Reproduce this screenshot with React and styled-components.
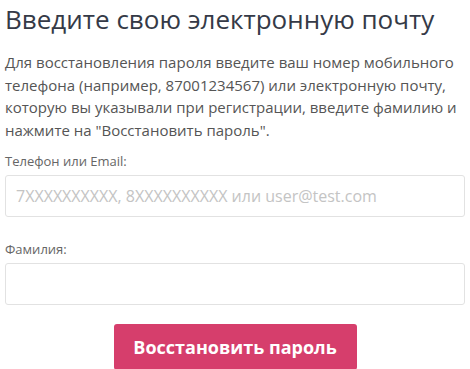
import styled, { createGlobalStyle } from "styled-components";

const Global = createGlobalStyle`
  body {
    margin: 0;
    background: #fff;
    font-family: "Open Sans", "Noto Sans", sans-serif;
  }
`;

const Page = styled.div`
  width: 470px;
  padding: 0 5px;
  box-sizing: border-box;
`;

const Title = styled.h1`
  margin: 0;
  padding-top: 1px;
  font-size: 26px;
  font-weight: 400;
  line-height: 36px;
  color: #353a47;
`;

const Text = styled.p`
  margin: 14px 0 0;
  font-size: 15px;
  line-height: 22.5px;
  color: #555;
`;

const Field = styled.div`
  margin-top: ${(p) => p.$top}px;
  display: flex;
  flex-direction: column;
`;

const Label = styled.label`
  font-size: 13px;
  line-height: 18px;
  color: #666;
  margin-bottom: 5px;
`;

const Input = styled.input`
  height: 42px;
  box-sizing: border-box;
  border: 1px solid #e2e2e2;
  border-radius: 3px;
  padding: 0 10px;
  font-family: inherit;
  font-size: 16px;
  color: #333;
  outline: none;
  &::placeholder {
    color: #c4c4c4;
  }
`;

const Actions = styled.div`
  display: flex;
  justify-content: center;
  margin-top: 19px;
`;

const Button = styled.button`
  width: 243px;
  height: 46px;
  border: none;
  border-radius: 3px;
  background: #d63e6c;
  color: #fff;
  font-family: inherit;
  font-size: 18px;
  font-weight: 700;
  cursor: pointer;
`;

export default function App() {
  return (
    <Page>
      <Global />
      <Title>Введите свою электронную почту</Title>
      <Text>
        Для восстановления пароля введите ваш номер мобильного телефона
        (например, 87001234567) или электронную почту, которую вы указывали
        при регистрации, введите фамилию и нажмите на "Восстановить пароль".
      </Text>
      <Field $top={11}>
        <Label>Телефон или Email:</Label>
        <Input placeholder="7XXXXXXXXXX, 8XXXXXXXXXX или user@test.com" />
      </Field>
      <Field $top={23}>
        <Label>Фамилия:</Label>
        <Input />
      </Field>
      <Actions>
        <Button>Восстановить пароль</Button>
      </Actions>
    </Page>
  );
}
